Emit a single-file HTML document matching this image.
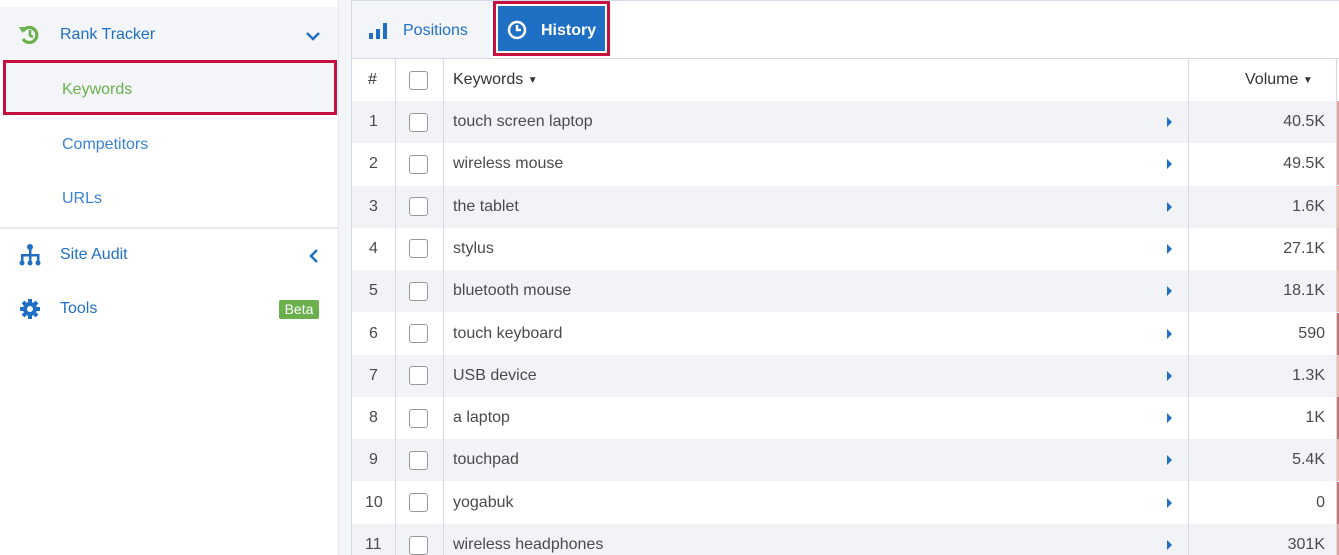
<!DOCTYPE html>
<html><head><meta charset="utf-8"><style>
*{box-sizing:border-box;margin:0;padding:0}
body{width:1339px;height:555px;overflow:hidden;background:#fff;font-family:"Liberation Sans",Arial,sans-serif;position:relative}
.side{position:absolute;left:0;top:0;width:339px;height:555px;background:#fff;border-right:1px solid #e3e7ef}
.a{position:absolute;color:#1f6fc5;font-size:16px}
.gap{position:absolute;left:339px;top:0;width:12px;height:555px;background:#f3f5f9}
.main{position:absolute;left:351px;top:0;width:988px;height:555px;border-left:1px solid #d3dbe8;border-top:1px solid #d3dbe8;overflow:hidden}
.tabbar{position:absolute;left:0;top:0;width:988px;height:58px;background:#fff;border-bottom:1px solid #d3dbe8}
.row{position:absolute;left:0;width:987px;height:42px;font-size:16px;color:#4a4a4a}
.c{position:absolute;top:0;height:100%;display:flex;align-items:center}
.cb{width:19px;height:19px;border:1px solid #999;border-radius:3px;background:#fff}
.vl{position:absolute;top:58px;width:1px;height:497px;background:#d3dbe8}
.tri{width:0;height:0;border-top:5px solid transparent;border-bottom:5px solid transparent;border-left:5px solid #1f6fc5}
</style></head><body>
<div class="side">
  <div style="position:absolute;left:0;top:7px;width:338px;height:53px;background:#f3f5f9"></div>
  <svg style="position:absolute;left:18px;top:24px" width="22" height="22" viewBox="0 0 22 22"><path d="M5 7 A7.5 7.5 0 1 1 5 15" fill="none" stroke="#6ab04c" stroke-width="3.2"/><path d="M1 3 L8 3 L4.5 9 Z" fill="#6ab04c"/><path d="M12 6 V11.5 L15 13" fill="none" stroke="#6ab04c" stroke-width="2.6"/></svg>
  <div class="a" style="left:60px;top:26px">Rank Tracker</div>
  <svg style="position:absolute;left:305px;top:30px" width="16" height="12"><path d="M2 3 L8 9 L14 3" fill="none" stroke="#1f6fc5" stroke-width="2.5"/></svg>
  <div style="position:absolute;left:3px;top:60px;width:334px;height:55px;border:3px solid #c8103e;background:#f3f5f9"></div>
  <div class="a" style="left:62px;top:81px;color:#6ab04c">Keywords</div>
  <div class="a" style="left:62px;top:136px;color:#3b82d6">Competitors</div>
  <div class="a" style="left:62px;top:190px;color:#3b82d6">URLs</div>
  <div style="position:absolute;left:0;top:227px;width:338px;height:2px;background:#e6eaf1"></div>
  <svg style="position:absolute;left:18px;top:244px" width="24" height="22" viewBox="0 0 24 22"><g fill="#1f6fc5"><circle cx="12" cy="3" r="3"/><rect x="11" y="3" width="2.5" height="15"/><rect x="3" y="10" width="18" height="2.5"/><rect x="3" y="10" width="2.5" height="8"/><rect x="19" y="10" width="2.5" height="8"/><circle cx="4" cy="19" r="2.5"/><circle cx="12" cy="19" r="2.5"/><circle cx="20" cy="19" r="2.5"/></g></svg>
  <div class="a" style="left:60px;top:246px">Site Audit</div>
  <svg style="position:absolute;left:308px;top:248px" width="12" height="16"><path d="M9 2 L3 8 L9 14" fill="none" stroke="#1f6fc5" stroke-width="2.5"/></svg>
  <svg style="position:absolute;left:19px;top:298px" width="22" height="22" viewBox="0 0 22 22"><g fill="#1f6fc5"><circle cx="11" cy="11" r="7"/><g stroke="#1f6fc5" stroke-width="4"><path d="M11 1 V21 M1 11 H21 M4 4 L18 18 M18 4 L4 18"/></g></g><circle cx="11" cy="11" r="3" fill="#fff"/></svg>
  <div class="a" style="left:60px;top:300px">Tools</div>
  <div style="position:absolute;left:279px;top:300px;width:40px;height:19px;background:#6ab04c;color:#fff;font-size:14px;border-radius:2px;text-align:center;line-height:19px">Beta</div>
</div>
<div class="gap"></div>
<div class="main">
  <div class="tabbar">
    <div style="position:absolute;left:0;top:0;width:138px;height:57px;background:#f3f5f9"></div>
    <svg style="position:absolute;left:16px;top:21px" width="22" height="18"><g fill="#1f6fc5"><rect x="1" y="11" width="4" height="6"/><rect x="8" y="7" width="4" height="10"/><rect x="15" y="1" width="4" height="16"/></g></svg>
    <div class="a" style="left:51px;top:21px">Positions</div>
    <div style="position:absolute;left:141px;top:0px;width:117px;height:55px;border:3px solid #c8103e;background:#fff"></div>
    <div style="position:absolute;left:146px;top:5px;width:107px;height:45px;background:#1f6fc5"></div>
    <svg style="position:absolute;left:154px;top:18px" width="22" height="22"><circle cx="11" cy="11" r="8" fill="none" stroke="#fff" stroke-width="2.5"/><path d="M11 6 V11 H15" fill="none" stroke="#fff" stroke-width="2.5"/></svg>
    <div class="a" style="left:189px;top:21px;color:#fff;font-weight:bold">History</div>
  </div>
  <div class="row" style="top:58px;background:#fff;color:#333">
    <div class="c" style="left:16px;width:20px">#</div>
    <div class="c" style="left:57px"><div class="cb"></div></div>
    <div class="c" style="left:101px">Keywords&nbsp;<span style="font-size:10px">▼</span></div>
    <div class="c" style="left:893px">Volume&nbsp;<span style="font-size:10px">▼</span></div>
  </div>
  <div id="rows"></div>
  <div class="vl" style="left:43px"></div>
  <div class="vl" style="left:91px"></div>
  <div class="vl" style="left:836px"></div>
  <div class="vl" style="left:984px"></div>
</div>
<script>
var d=[["touch screen laptop","40.5K","#e8a3a3"],["wireless mouse","49.5K","#e8a3a3"],["the tablet","1.6K","#f5b9a8"],["stylus","27.1K","#eaa8a8"],["bluetooth mouse","18.1K","#f2b3a5"],["touch keyboard","590","#c87070"],["USB device","1.3K","#f5b9a8"],["a laptop","1K","#c87070"],["touchpad","5.4K","#f2b3a5"],["yogabuk","0","#c87070"],["wireless headphones","301K","#e8a3a3"]];
var h="";d.forEach(function(r,i){h+='<div class="row" style="top:'+(100+i*42.3)+'px;background:'+(i%2?'#fff':'#f2f3f7')+'"><div class="c" style="left:'+(i>=9?13:17)+'px">'+(i+1)+'</div><div class="c" style="left:57px"><div class="cb"></div></div><div class="c" style="left:101px">'+r[0]+'</div><div class="c" style="left:815px"><div class="tri"></div></div><div class="c" style="right:14px">'+r[1]+'</div><div style="position:absolute;right:0;top:0;width:2px;height:100%;background:'+r[2]+'"></div></div>'});
document.getElementById("rows").outerHTML=h;
</script>
</body></html>
